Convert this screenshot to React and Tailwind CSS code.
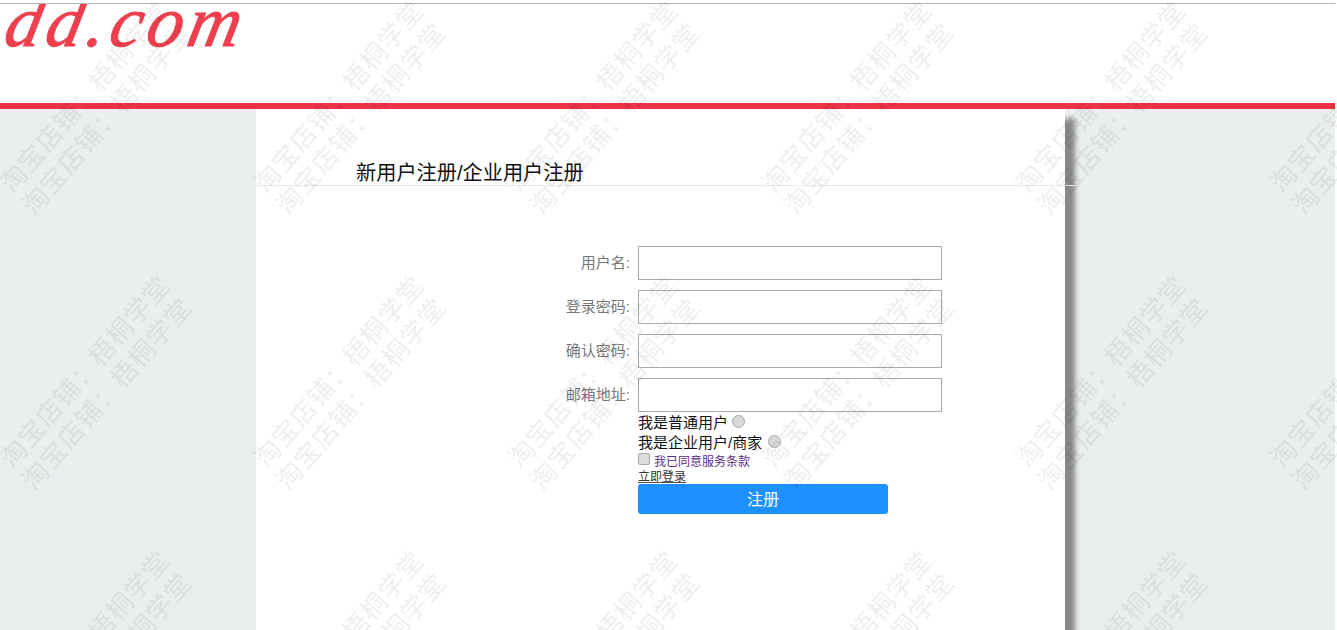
const fields = ["用户名:", "登录密码:", "确认密码:", "邮箱地址:"];

// tiled watermark that sits over the whole page
const marks = [];
for (let col = 0; col < 6; col++) {
  for (let row = 0; row < 3; row++) {
    marks.push({ x: 85 + col * 254, y: 97 + row * 275 });
    marks.push({ x: 107 + col * 254, y: 119 + row * 275 });
  }
}

function Watermark() {
  return (
    <div className="absolute inset-0 overflow-hidden pointer-events-none">
      {marks.map((m, i) => (
        <span
          key={i}
          className="absolute -translate-x-1/2 -translate-y-1/2 -rotate-[49deg] whitespace-nowrap text-[26px] leading-none tracking-[1px] font-medium text-black/[0.07]"
          style={{ left: m.x, top: m.y }}
        >
          {"淘宝店铺\uFF1A梧桐学堂"}
        </span>
      ))}
    </div>
  );
}

export default function App() {
  return (
    <div className="relative h-[630px] overflow-hidden bg-white font-['Liberation_Sans','Noto_Sans_CJK_SC',sans-serif]">
      <div className="mr-[2px]">
        <header className="mt-[3px] h-[100px] overflow-hidden border-t border-[#b4b4b4] bg-white">
          <div className="pl-[7px] -mt-[22px] -skew-x-[12deg] text-[72px] leading-[80px] italic font-['Liberation_Serif',serif] tracking-[5px] text-[#ee3f4e] [-webkit-text-stroke:1px_#ee3f4e]">
            dd.com
          </div>
        </header>
        <div className="h-[6px] bg-[#ee3344]" />

        <div className="h-[521px] bg-[#ebeeee] pl-[256px]">
          <main className="h-full w-[809px] bg-white shadow-[10px_10px_5px_#888888]">
            <h1 className="box-content h-[34px] w-full border-b border-[#e8e8e8] pt-[42px] pl-[100px] text-[20.2px] leading-[44px] font-normal text-[#111]">
              新用户注册/企业用户注册
            </h1>

            <form className="pt-[60px] pl-[382px]">
              <div className="flex flex-col gap-[10px]">
                {fields.map((label) => (
                  <div key={label} className="flex items-center">
                    <label className="-ml-[100px] w-[92px] text-right text-[15px] whitespace-nowrap text-[#777]">
                      {label}
                    </label>
                    <input
                      type="text"
                      className="ml-[8px] h-[34px] w-[304px] border border-[#a9a9a9] bg-white"
                    />
                  </div>
                ))}
              </div>

              <div className="mt-[1px] flex h-[20px] items-center text-[15px] text-[#111]">
                我是普通用户
                <span className="ml-[4px] -mt-[3px] h-[13px] w-[13px] rounded-full border border-[#a8a8a8] bg-[#d8d8d8]" />
              </div>
              <div className="flex h-[20px] items-center text-[15px] text-[#111]">
                我是企业用户/商家
                <span className="ml-[6px] -mt-[3px] h-[13px] w-[13px] rounded-full border border-[#a8a8a8] bg-[#d8d8d8]" />
              </div>
              <div className="flex h-[17px] items-center text-[12px] text-[#5b2a86]">
                <span className="-mt-[5px] mr-[4px] h-[12px] w-[12px] rounded-[2px] border border-[#a8a8a8] bg-[#dcdcdc]" />
                我已同意服务条款
              </div>
              <a className="block h-[14px] w-fit text-[12px] leading-[14px] text-[#333] underline decoration-[#555]">
                立即登录
              </a>
              <button
                type="button"
                className="block h-[30px] w-[250px] rounded-[3px] bg-[#1e90ff] pt-[1px] text-[16px] text-white"
              >
                注册
              </button>
            </form>
          </main>
        </div>
      </div>

      <Watermark />
    </div>
  );
}
